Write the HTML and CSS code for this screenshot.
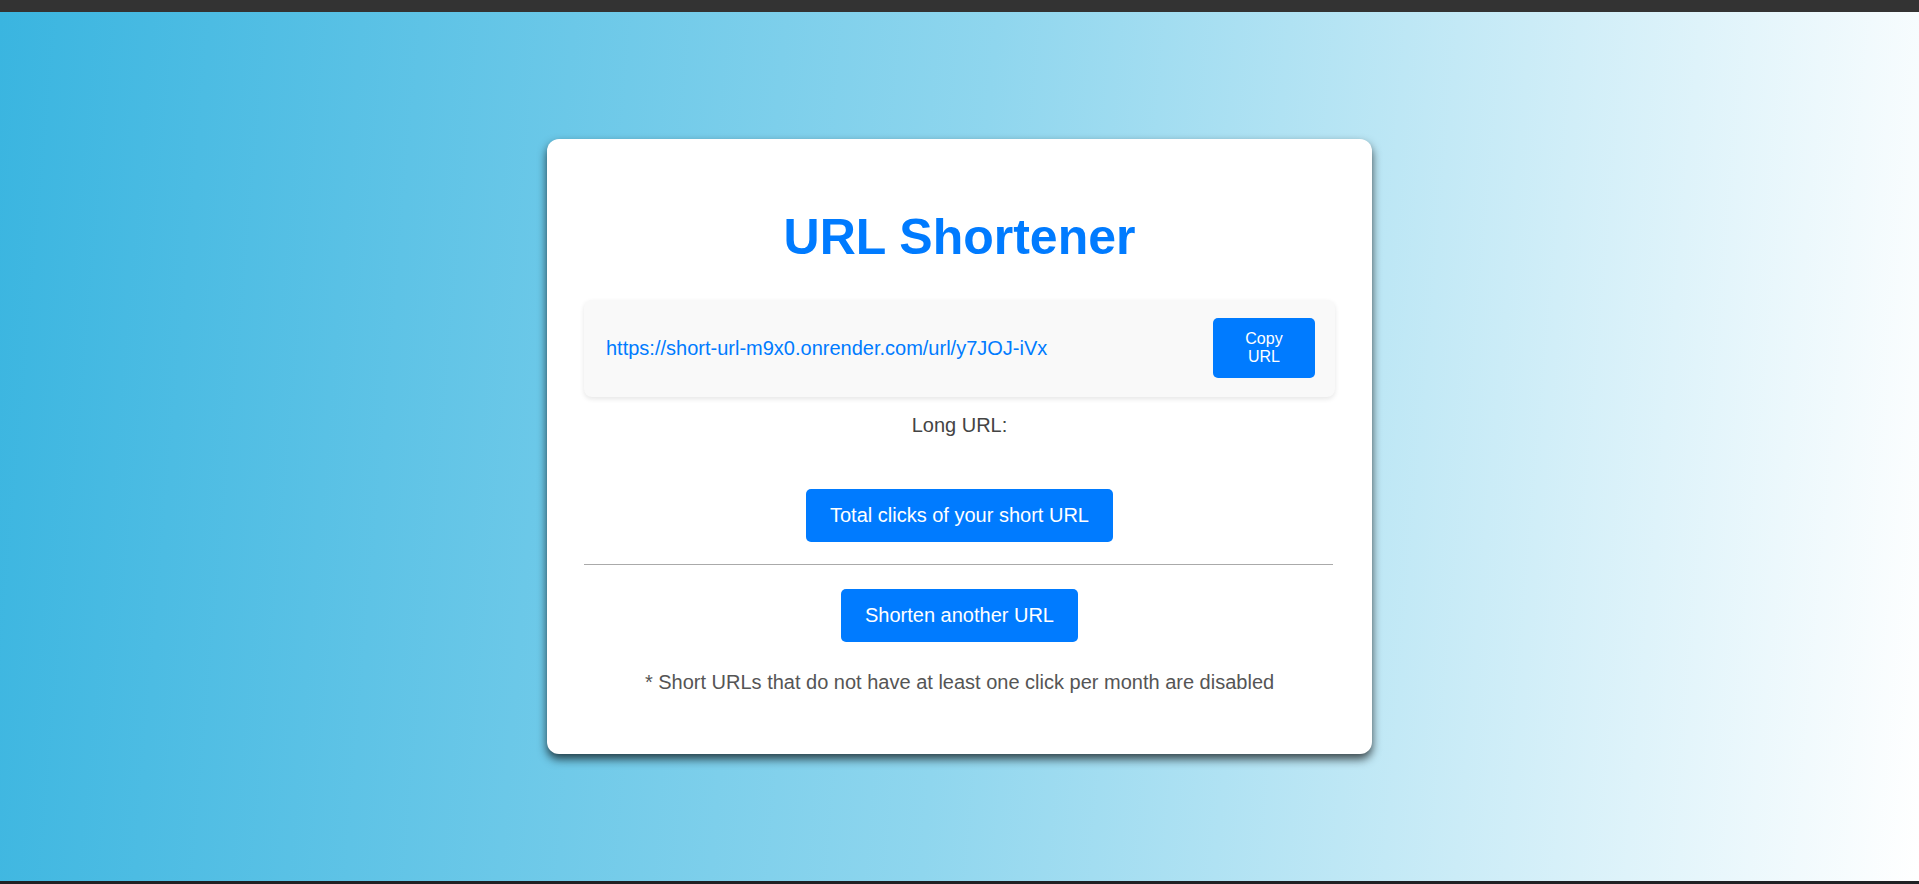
FILE: index.html
```html
<!DOCTYPE html>
<html lang="en">
<head>
<meta charset="utf-8">
<title>URL Shortener</title>
<link rel="stylesheet" href="styles.css">
</head>
<body>
<div class="topbar"></div>
<main class="page">
  <section class="card">
    <h1 class="title">URL Shortener</h1>
    <div class="result">
      <a class="short-link" href="#">https://short-url-m9x0.onrender.com/url/y7JOJ-iVx</a>
      <button class="btn copy-btn">Copy URL</button>
    </div>
    <p class="long-url">Long URL: </p>
    <div class="actions">
      <button class="btn big-btn">Total clicks of your short URL</button>
    </div>
    <hr class="divider">
    <div class="actions">
      <button class="btn big-btn">Shorten another URL</button>
    </div>
    <p class="note">* Short URLs that do not have at least one click per month are disabled</p>
  </section>
</main>
<div class="bottombar"></div>
</body>
</html>
```

FILE: styles.css
```css
html, body {
  margin: 0;
  padding: 0;
  height: 100%;
}
body {
  display: flex;
  flex-direction: column;
  font-family: "Liberation Sans", Arial, sans-serif;
  background: #ffffff;
}
.topbar {
  height: 12px;
  background: #333333;
  flex: none;
}
.bottombar {
  height: 3px;
  background: #202124;
  flex: none;
}
.page {
  flex: 1;
  display: flex;
  justify-content: center;
  align-items: flex-start;
  padding-top: 127px;
  background: linear-gradient(95deg, #3ab5e0 0%, #8fd6ee 50%, #ffffff 100%);
}
.card {
  width: 825px;
  box-sizing: border-box;
  background: #ffffff;
  border-radius: 12px;
  box-shadow: 0 5px 10px rgba(0, 0, 0, 0.7);
  padding: 70px 37px 60px;
  text-align: center;
}
.title {
  margin: 0 0 34px;
  font-size: 50px;
  font-weight: bold;
  line-height: 57px;
  color: #007bff;
}
.result {
  display: flex;
  align-items: center;
  justify-content: space-between;
  background: #f9f9f9;
  border-radius: 8px;
  box-shadow: 0 2px 5px rgba(0, 0, 0, 0.1);
  padding: 18px 20px 19px 22px;
}
.short-link {
  color: #007bff;
  text-decoration: none;
  font-size: 20px;
  line-height: 23px;
}
.btn {
  font-family: "Liberation Sans", Arial, sans-serif;
  background: #007bff;
  color: #ffffff;
  border: none;
  border-radius: 5px;
  cursor: pointer;
}
.copy-btn {
  width: 102px;
  height: 60px;
  font-size: 16px;
  line-height: 18px;
  padding: 0 18px;
}
.long-url {
  margin: 17px 0 52px;
  font-size: 20px;
  line-height: 23px;
  color: #444444;
}
.actions {
  display: flex;
  justify-content: center;
}
.big-btn {
  font-size: 20px;
  line-height: 23px;
  padding: 15px 24px;
}
.divider {
  border: none;
  border-top: 1px solid #aaaaaa;
  margin: 22px 2px 24px 0;
}
.note {
  margin: 29px 0 0;
  font-size: 20px;
  line-height: 23px;
  color: #555555;
}
```
